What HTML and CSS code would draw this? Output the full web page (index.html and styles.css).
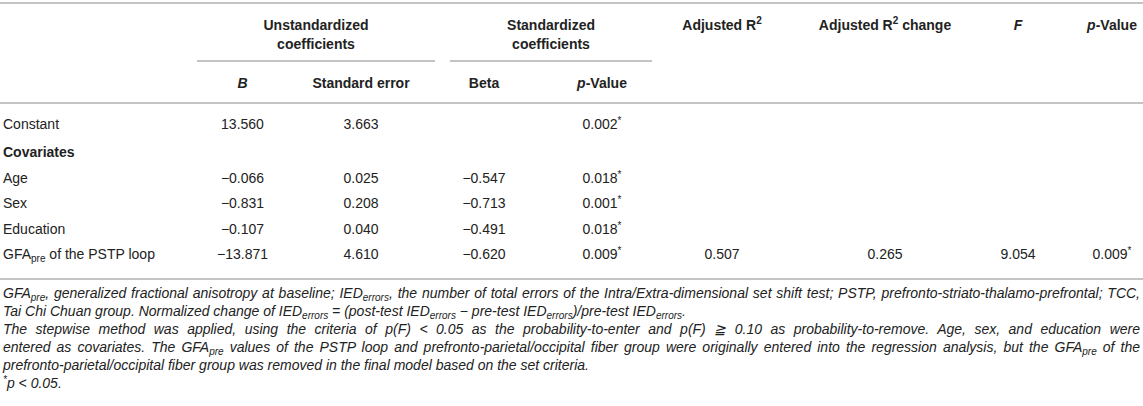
FILE: index.html
```html
<!DOCTYPE html>
<html>
<head>
<meta charset="utf-8">
<link rel="stylesheet" href="styles.css">
</head>
<body>
<div class="wrap">
<table class="tbl">
  <colgroup>
    <col class="c1"><col class="c2"><col class="c3"><col class="c4"><col class="c5"><col class="c6"><col class="c7"><col class="c8"><col class="c9">
  </colgroup>
  <thead>
    <tr class="h1">
      <th class="lbl" rowspan="2"></th>
      <th colspan="2" class="grp g1"><div class="grp-in">Unstandardized<br>coefficients</div></th>
      <th colspan="2" class="grp g2"><div class="grp-in">Standardized<br>coefficients</div></th>
      <th rowspan="2" class="top">Adjusted R<sup>2</sup></th>
      <th rowspan="2" class="top">Adjusted R<sup>2</sup> change</th>
      <th rowspan="2" class="top"><i>F</i></th>
      <th rowspan="2" class="top last"><i>p</i>-Value</th>
    </tr>
    <tr class="h2">
      <th><i>B</i></th>
      <th>Standard error</th>
      <th>Beta</th>
      <th><i>p</i>-Value</th>
    </tr>
  </thead>
  <tbody>
    <tr class="first">
      <td class="lbl">Constant</td><td>13.560</td><td>3.663</td><td></td><td>0.002<sup class="ast">*</sup></td><td></td><td></td><td></td><td class="last"></td>
    </tr>
    <tr>
      <td class="lbl bold">Covariates</td><td></td><td></td><td></td><td></td><td></td><td></td><td></td><td class="last"></td>
    </tr>
    <tr>
      <td class="lbl">Age</td><td>&minus;0.066</td><td>0.025</td><td>&minus;0.547</td><td>0.018<sup class="ast">*</sup></td><td></td><td></td><td></td><td class="last"></td>
    </tr>
    <tr>
      <td class="lbl">Sex</td><td>&minus;0.831</td><td>0.208</td><td>&minus;0.713</td><td>0.001<sup class="ast">*</sup></td><td></td><td></td><td></td><td class="last"></td>
    </tr>
    <tr>
      <td class="lbl">Education</td><td>&minus;0.107</td><td>0.040</td><td>&minus;0.491</td><td>0.018<sup class="ast">*</sup></td><td></td><td></td><td></td><td class="last"></td>
    </tr>
    <tr class="lastrow">
      <td class="lbl">GFA<sub>pre</sub> of the PSTP loop</td><td>&minus;13.871</td><td>4.610</td><td>&minus;0.620</td><td>0.009<sup class="ast">*</sup></td><td>0.507</td><td>0.265</td><td>9.054</td><td class="last">0.009<sup class="ast">*</sup></td>
    </tr>
  </tbody>
</table>
<div class="notes">
  <p class="note">GFA<sub>pre</sub>, generalized fractional anisotropy at baseline; IED<sub>errors</sub>, the number of total errors of the Intra/Extra-dimensional set shift test; PSTP, prefronto-striato-thalamo-prefrontal; TCC, Tai Chi Chuan group. Normalized change of IED<sub>errors</sub> = (post-test IED<sub>errors</sub> &minus; pre-test IED<sub>errors</sub>)/pre-test IED<sub>errors</sub>.</p>
  <p class="note">The stepwise method was applied, using the criteria of <i>p(F)</i> &lt; 0.05 as the probability-to-enter and <i>p(F)</i> &#8807; 0.10 as probability-to-remove. Age, sex, and education were <span class="nw">entered as covariates.</span> The GFA<sub>pre</sub> values of the PSTP loop and prefronto-parietal/occipital fiber group were originally entered into the regression analysis, but the GFA<sub>pre</sub> of the <span class="nw">prefronto-parietal/occipital</span> fiber group was removed in the final model based on the set criteria.</p>
  <p class="note"><sup class="ast">*</sup>p &lt; 0.05.</p>
</div>
</div>
</body>
</html>
```

FILE: styles.css
```css
html, body {
  margin: 0;
  padding: 0;
  background: #ffffff;
}
body {
  font-family: "Liberation Sans", Arial, sans-serif;
  color: #222222;
}
.wrap {
  padding-top: 2px;
}
.tbl {
  width: 1143px;
  border-collapse: collapse;
  table-layout: fixed;
  font-size: 14px;
  line-height: 19px;
}
.c1 { width: 185px; }
.c2 { width: 115px; }
.c3 { width: 122px; }
.c4 { width: 124px; }
.c5 { width: 112px; }
.c6 { width: 128px; }
.c7 { width: 198px; }
.c8 { width: 68px; }
.c9 { width: 91px; }

.tbl th, .tbl td {
  padding: 0;
  text-align: center;
  vertical-align: top;
}
.tbl th {
  font-weight: bold;
  color: #222222;
}
.tbl thead tr.h1 th {
  border-top: 2px solid #c4c4c4;
}
.tbl thead tr.h1 th.top,
.tbl thead tr.h1 th.grp {
  padding-top: 12px;
}
.grp-in {
  border-bottom: 2px solid #c4c4c4;
  padding-bottom: 6px;
}
.g1 .grp-in { margin: 0 -13px 0 12px; }
.g2 .grp-in { margin: 0 6px 0 28px; }
.tbl thead tr.h2 th {
  padding-top: 12px;
  padding-bottom: 9px;
  border-bottom: 2px solid #c4c4c4;
}
.tbl thead tr.h1 th.top,
.tbl thead tr.h1 th.lbl {
  border-bottom: 2px solid #c4c4c4;
}
.tbl td {
  padding-top: 3px;
  padding-bottom: 3.5px;
}
.tbl tr.first td {
  padding-top: 11px;
  padding-bottom: 6px;
}
.tbl tr.lastrow td {
  padding-bottom: 14px;
  border-bottom: 2px solid #c4c4c4;
}
.tbl .lbl {
  text-align: left;
  padding-left: 3px;
}
.tbl .bold {
  font-weight: bold;
}
.tbl .last {
  padding-left: 29px;
}
sup {
  font-size: 10px;
  line-height: 0;
  vertical-align: 6px;
}
sup.ast {
  font-size: 10px;
  vertical-align: 5px;
}
sub {
  font-size: 10px;
  line-height: 0;
  vertical-align: -3px;
}
.notes {
  padding: 4px 3px 0 3px;
}
.note {
  margin: 0;
  font-size: 14px;
  line-height: 18px;
  font-style: italic;
  text-align: justify;
  color: #222222;
}
.nw {
  white-space: nowrap;
}
```
